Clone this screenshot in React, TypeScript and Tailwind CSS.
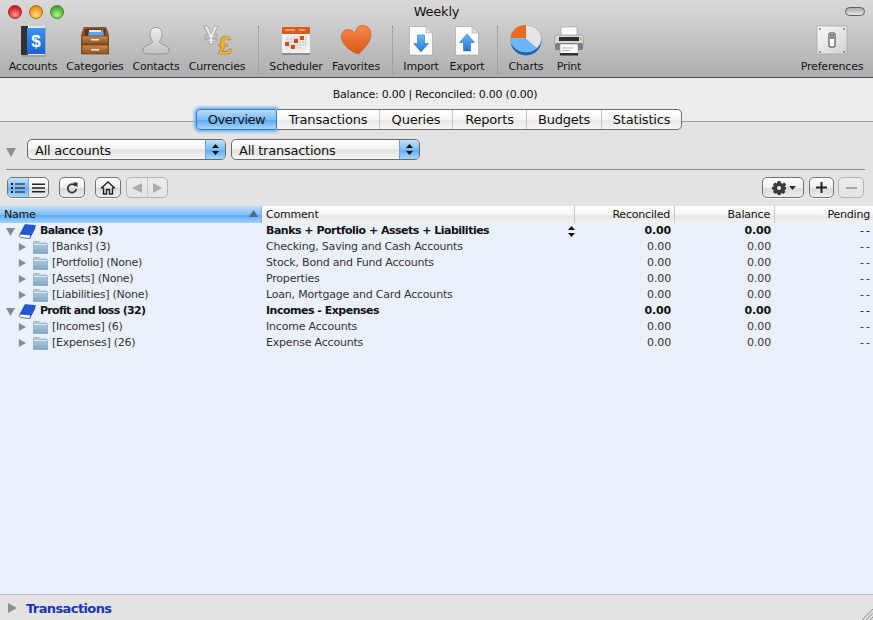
import type { ReactNode } from 'react';

const font = "[font-family:'DejaVu_Sans',sans-serif]";

function Book() {
  return (
    <svg width="32" height="32" viewBox="0 0 32 32">
      <defs>
        <linearGradient id="cover" x1="0" y1="0" x2="0" y2="1">
          <stop offset="0" stopColor="#3d93f5" />
          <stop offset="1" stopColor="#1a62cf" />
        </linearGradient>
      </defs>
      <rect x="5" y="2" width="24" height="30" fill="#000" opacity=".15" />
      <rect x="4" y="1" width="24" height="29" fill="#e8e8e8" />
      <rect x="4" y="1" width="7" height="29" fill="#2f3134" />
      <rect x="10" y="3" width="18" height="26" fill="url(#cover)" />
      <text x="19" y="22" textAnchor="middle" fontSize="17" fontWeight="700" fill="#fff" fontFamily="Liberation Sans">$</text>
    </svg>
  );
}

function Drawers() {
  return (
    <svg width="32" height="32" viewBox="0 0 32 32">
      <defs>
        <linearGradient id="wood" x1="0" y1="0" x2="0" y2="1">
          <stop offset="0" stopColor="#c98a4c" />
          <stop offset="1" stopColor="#8f5424" />
        </linearGradient>
      </defs>
      <path d="M4 4 Q4 2 6 2 H26 Q28 2 28 4 L30 10 V29 H2 V10 Z" fill="#8c5426" />
      <rect x="6" y="4" width="20" height="7" fill="#5c3516" />
      <path d="M9 11 L10 6 H22 L24 4 L25 11 Z" fill="#5aa9ee" />
      <rect x="10" y="5" width="12" height="2" fill="#dfeeff" />
      <rect x="3" y="11" width="26" height="8" fill="url(#wood)" stroke="#6e3f18" strokeWidth=".7" />
      <rect x="3" y="20" width="26" height="9" fill="url(#wood)" stroke="#6e3f18" strokeWidth=".7" />
      <rect x="12" y="14" width="8" height="1.5" fill="#e8e8e8" />
      <rect x="12" y="24" width="8" height="1.5" fill="#e8e8e8" />
    </svg>
  );
}

function Person() {
  return (
    <svg width="32" height="32" viewBox="0 0 32 32">
      <defs>
        <linearGradient id="person" x1="0" y1="0" x2="0" y2="1">
          <stop offset="0" stopColor="#ededed" />
          <stop offset="1" stopColor="#c2c2c2" />
        </linearGradient>
      </defs>
      <path
        d="M16 2.5 C20 2.5 22 5.5 22 9 C22 12 21 14.5 19.5 16.5 C19.5 19 24 19.5 27 21.5 C29 23 29 25 29 27 C29 28.5 24 29 16 29 C8 29 3 28.5 3 27 C3 25 3 23 5 21.5 C8 19.5 12.5 19 12.5 16.5 C11 14.5 10 12 10 9 C10 5.5 12 2.5 16 2.5 Z"
        fill="url(#person)"
        stroke="#7f7f7f"
        strokeWidth=".7"
      />
    </svg>
  );
}

function Currency() {
  return (
    <svg width="32" height="32" viewBox="0 0 32 32" overflow="visible">
      <text x="10" y="19" textAnchor="middle" fontSize="26" fontWeight="700" fill="#ededed" stroke="#8c8c8c" strokeWidth=".6" fontFamily="Liberation Sans">¥</text>
      <text x="24.5" y="29" textAnchor="middle" fontSize="25" fontWeight="700" fill="#f1b93b" stroke="#b5761a" strokeWidth=".6" fontFamily="Liberation Sans">£</text>
    </svg>
  );
}

function Calendar() {
  const red = [[14, 14], [20, 11], [5, 17], [11, 20]];
  return (
    <svg width="32" height="32" viewBox="0 0 32 32">
      <rect x="2" y="2" width="28" height="28" fill="#f0f0f0" />
      <rect x="2" y="28" width="28" height="2" fill="#8e8e8e" />
      <rect x="2" y="2" width="28" height="7" fill="#dc5a20" />
      <rect x="5" y="4.5" width="10" height="1" fill="#fbd8c4" />
      <rect x="19" y="4.5" width="6" height="1" fill="#fbd8c4" />
      <g stroke="#c2c2c2" strokeWidth=".6" fill="none">
        <path d="M5 14 H27 M5 17 H27 M5 20 H27 M5 23 H22 M8 11 V23 M11 11 V23 M14 11 V23 M17 11 V23 M20 11 V23 M23 11 V20 M26 11 V20" />
      </g>
      {red.map(([x, y]) => (
        <rect key={`${x}-${y}`} x={x} y={y} width="4" height="4" fill="#d8481a" />
      ))}
    </svg>
  );
}

function Heart() {
  return (
    <svg width="32" height="32" viewBox="0 0 32 32">
      <defs>
        <linearGradient id="heart" x1="0" y1="0" x2="0" y2="1">
          <stop offset="0" stopColor="#f78a4a" />
          <stop offset="1" stopColor="#dd5614" />
        </linearGradient>
      </defs>
      <path
        d="M21 .5 C27 -.5 31 4 31 9.5 C31 17 24 24 18.5 29 C13 27.5 3.5 22 1.5 13.5 C.5 8.5 3.5 4.5 8 4.5 C11 4.5 13.5 6 15 8 C16 4 18 1 21 .5 Z"
        fill="url(#heart)"
        stroke="#c14d10"
        strokeWidth=".5"
      />
    </svg>
  );
}

function Doc({ up }: { up?: boolean }) {
  return (
    <svg width="32" height="32" viewBox="0 0 32 32">
      <defs>
        <linearGradient id={up ? 'arrowUp' : 'arrowDown'} x1="0" y1="0" x2="0" y2="1">
          <stop offset="0" stopColor="#6db6f8" />
          <stop offset="1" stopColor="#2475d8" />
        </linearGradient>
      </defs>
      <path d="M4.5 1.5 H21 L27.5 8 V30 H4.5 Z" fill="#fcfcfc" stroke="#a8a8a8" strokeWidth=".7" />
      <path d="M21 1.5 V8 H27.5 Z" fill="#dedede" stroke="#a8a8a8" strokeWidth=".5" />
      {up ? (
        <path d="M16 9 L23.5 17.5 H19.5 V26 H12.5 V17.5 H8.5 Z" fill="url(#arrowUp)" stroke="#1f63b8" strokeWidth=".5" />
      ) : (
        <path d="M12.5 10 H19.5 V18.5 H23.5 L16 27 L8.5 18.5 H12.5 Z" fill="url(#arrowDown)" stroke="#1f63b8" strokeWidth=".5" />
      )}
    </svg>
  );
}

function Pie() {
  return (
    <svg width="32" height="32" viewBox="0 0 32 32">
      <ellipse cx="16" cy="15.5" rx="15.5" ry="15" fill="#1f62b0" />
      <ellipse cx="16" cy="13.5" rx="15.5" ry="13.5" fill="#e6e6e6" stroke="#9a9a9a" strokeWidth=".5" />
      <path d="M16 13.5 L.5 13 A15.5 13.5 0 0 1 16 0 Z" fill="#ea6a24" />
      <path d="M16 13.5 L.5 13 A15.5 13.5 0 0 0 27 23 Z" fill="#6cb6f7" />
    </svg>
  );
}

function Printer() {
  return (
    <svg width="32" height="32" viewBox="0 0 32 32">
      <rect x="8" y="2" width="16" height="10" fill="#fafafa" stroke="#9c9c9c" strokeWidth=".6" />
      <rect x="1.5" y="10" width="29" height="12" rx="2.5" fill="#d5d5d5" stroke="#8f8f8f" strokeWidth=".6" />
      <rect x="6" y="12" width="20" height="4" fill="#303030" />
      <rect x="2" y="18" width="28" height="7" rx="1.5" fill="#7e7e7e" />
      <rect x="27" y="13" width="2" height="1.5" fill="#e5962d" />
      <rect x="7" y="19" width="18" height="11" fill="#fbfbfb" stroke="#8f8f8f" strokeWidth=".6" />
      <path d="M9 23 H20 M9 25.5 H17" stroke="#9a9a9a" strokeWidth=".7" />
      <rect x="7" y="28" width="18" height="2.5" fill="#333" />
    </svg>
  );
}

function Switch() {
  const screws = [[4, 4], [28, 4], [4, 27], [28, 27]];
  return (
    <svg width="32" height="32" viewBox="0 0 32 32">
      <defs>
        <linearGradient id="plate" x1="0" y1="0" x2="1" y2="1">
          <stop offset="0" stopColor="#fafafa" />
          <stop offset="1" stopColor="#d2d2d2" />
        </linearGradient>
      </defs>
      <rect x="1" y="1" width="30" height="28" fill="url(#plate)" stroke="#9b9b9b" strokeWidth=".6" />
      {screws.map(([x, y]) => (
        <circle key={`${x}-${y}`} cx={x} cy={y} r="1" fill="#777" />
      ))}
      <rect x="13" y="8" width="6" height="14" rx="1" fill="#fff" stroke="#333" strokeWidth="1" />
      <rect x="14" y="9" width="4" height="5" fill="#8a8a8a" />
    </svg>
  );
}

function SmallBook() {
  return (
    <svg width="17" height="15" viewBox="0 0 17 15">
      <path d="M6 .5 L16.5 1.5 L11.5 11 L1 10 Z" fill="#1f58d6" stroke="#123a9c" strokeWidth=".5" />
      <path d="M1 10 Q0 12.5 1.5 13.5 L11 14.5 L11.5 11 Z" fill="#fff" stroke="#123a9c" strokeWidth=".7" />
      <path d="M11.5 11 L11 14.5 L16 5 L16.5 1.5 Z" fill="#1a4ab8" />
    </svg>
  );
}

function Folder() {
  return (
    <svg width="15" height="13" viewBox="0 0 16 13" preserveAspectRatio="none">
      <defs>
        <linearGradient id="folder" x1="0" y1="0" x2="0" y2="1">
          <stop offset="0" stopColor="#bad4e6" />
          <stop offset="1" stopColor="#7ea9c6" />
        </linearGradient>
      </defs>
      <path d="M.5 2 Q.5 .5 2 .5 H6 L7 2 H14 Q15.5 2 15.5 3.5 V12.5 H.5 Z" fill="url(#folder)" stroke="#7d97aa" strokeWidth=".6" />
      <path d="M1 3.5 H15" stroke="#e3eff7" strokeWidth=".8" />
    </svg>
  );
}

function Tri({ down, color = '#8a8a8a', size = 9 }: { down?: boolean; color?: string; size?: number }) {
  return (
    <svg width={size} height={size} viewBox="0 0 10 10">
      <path d={down ? 'M0 1 H10 L5 10 Z' : 'M1 0 L10 5 L1 10 Z'} fill={color} />
    </svg>
  );
}

function Stepper({ color = '#111' }: { color?: string }) {
  return (
    <svg width="7" height="11" viewBox="0 0 7 11">
      <path d="M3.5 0 L7 4 H0 Z M3.5 11 L0 7 H7 Z" fill={color} />
    </svg>
  );
}

const tools = [
  { label: 'Accounts', icon: <Book />, cls: 'w-[62px]' },
  { label: 'Categories', icon: <Drawers />, cls: 'w-[62px]' },
  { label: 'Contacts', icon: <Person />, cls: 'w-[60px]' },
  { label: 'Currencies', icon: <Currency />, cls: 'w-[62px]' },
  { sep: true, cls: 'ml-[10px] mr-[7px]' },
  { label: 'Scheduler', icon: <Calendar />, cls: 'w-[60px]' },
  { label: 'Favorites', icon: <Heart />, cls: 'w-[60px]' },
  { sep: true, cls: 'ml-[6px] mr-[5px]' },
  { label: 'Import', icon: <Doc />, cls: 'w-[46px]' },
  { label: 'Export', icon: <Doc up />, cls: 'w-[46px]' },
  { sep: true, cls: 'ml-[7px] mr-[5px]' },
  { label: 'Charts', icon: <Pie />, cls: 'w-[46px]' },
  { label: 'Print', icon: <Printer />, cls: 'w-[40px]' },
];

function Tool({ label, icon, cls }: { label: string; icon: ReactNode; cls: string }) {
  return (
    <div className={`flex flex-col items-center ${cls}`}>
      <div className="h-[32px] w-[32px]">{icon}</div>
      <div className="mt-[3px] whitespace-nowrap text-[11px] leading-[14px] tracking-[-0.2px] text-[#141414]">{label}</div>
    </div>
  );
}

const tabs = [
  { label: 'Transactions', cls: 'w-[103px]' },
  { label: 'Queries', cls: 'w-[73px]' },
  { label: 'Reports', cls: 'w-[74px]' },
  { label: 'Budgets', cls: 'w-[75px]' },
  { label: 'Statistics', cls: 'w-[79px] rounded-r-[5px] border-r-0' },
];

const aqua = 'bg-[linear-gradient(#c4e0fb,#7dbcf7_50%,#5faaf3_52%,#a9dafe)]';
const btn =
  'flex h-[21px] items-center justify-center rounded-[5px] border border-[#747474] bg-[linear-gradient(#ffffff,#f0f0f0_50%,#dcdcdc_55%,#eeeeee)] shadow-[0_1px_0_#ffffff]';
const btnOff =
  'flex h-[21px] items-center justify-center rounded-[5px] border border-[#b5b5b5] bg-[linear-gradient(#ececec,#e4e4e4)]';

function Select({ label, cls }: { label: string; cls: string }) {
  return (
    <div className={`flex h-[21px] items-stretch overflow-hidden rounded-[5px] border border-[#6a6a6a] bg-[linear-gradient(#ffffff,#f3f3f3_45%,#e2e2e2_55%,#f8f8f8)] ${cls}`}>
      <div className="flex-1 pl-[7px] text-[13px] leading-[21px] tracking-[-0.25px] text-[#111]">{label}</div>
      <div className={`flex w-[20px] items-center justify-center border-l border-[#7c9ccb] ${aqua}`}>
        <Stepper />
      </div>
    </div>
  );
}

const rows = [
  { name: 'Balance (3)', comment: 'Banks + Portfolio + Assets + Liabilities', top: true, stepper: true },
  { name: '[Banks] (3)', comment: 'Checking, Saving and Cash Accounts' },
  { name: '[Portfolio] (None)', comment: 'Stock, Bond and Fund Accounts' },
  { name: '[Assets] (None)', comment: 'Properties' },
  { name: '[Liabilities] (None)', comment: 'Loan, Mortgage and Card Accounts' },
  { name: 'Profit and loss (32)', comment: 'Incomes - Expenses', top: true },
  { name: '[Incomes] (6)', comment: 'Income Accounts' },
  { name: '[Expenses] (26)', comment: 'Expense Accounts' },
];

const grid = 'grid grid-cols-[262px_313px_100px_100px_98px]';

export default function App() {
  return (
    <div className={`flex h-[620px] w-[873px] flex-col overflow-hidden bg-[#e3e3e3] ${font}`}>
      {/* title bar and toolbar */}
      <div className="h-[78px] shrink-0 border-b border-[#4e4e4e] bg-[linear-gradient(#d9d9d9,#cbcbcb_35%,#adadad)]">
        <div className="grid h-[23px] grid-cols-[1fr_auto_1fr] items-center">
          <div className="flex gap-[7px] pl-[8px]">
            <div className="h-[14px] w-[14px] rounded-full border border-[#9c2a2a] bg-[radial-gradient(circle_at_50%_75%,#ff9a9a,#e02a2a_60%,#a81818)]" />
            <div className="h-[14px] w-[14px] rounded-full border border-[#a86c1a] bg-[radial-gradient(circle_at_50%_75%,#ffe08a,#f59a20_60%,#c8700c)]" />
            <div className="h-[14px] w-[14px] rounded-full border border-[#3f8a2c] bg-[radial-gradient(circle_at_50%_75%,#b4f08a,#5ab83a_60%,#35861f)]" />
          </div>
          <div className="text-[13px] leading-[16px] tracking-[-0.2px] text-[#111]">Weekly</div>
          <div className="flex justify-end pr-[8px]">
            <div className="h-[9px] w-[20px] rounded-full border border-[#5f5f5f] bg-[linear-gradient(#a9a9a9,#e6e6e6)]" />
          </div>
        </div>
        <div className="flex items-start pl-[2px] pt-[2px]">
          {tools.map((t, i) =>
            t.sep ? (
              <div key={i} className={`mt-[1px] h-[48px] w-0 border-l border-dotted border-[#8a8a8a] ${t.cls}`} />
            ) : (
              <Tool key={i} label={t.label as string} icon={t.icon} cls={t.cls} />
            ),
          )}
          <div className="ml-auto pr-[3px]">
            <Tool label="Preferences" icon={<Switch />} cls="w-[76px]" />
          </div>
        </div>
      </div>

      {/* balance and tabs */}
      <div className="h-[44px] shrink-0 border-b border-[#9c9c9c] bg-[#ededed] pr-[3px] pt-[10px] text-center text-[11px] leading-[14px] tracking-[-0.25px] text-[#111]">
        Balance: 0.00 | Reconciled: 0.00 (0.00)
      </div>
      <div className="relative -mt-[13px] flex h-[21px] shrink-0 pl-[196px] text-[13px] leading-[19px] tracking-[-0.2px] text-[#111]">
        <div className="flex w-[81px] items-center justify-center rounded-l-[4px] rounded-r-[2px] border border-[#3f78c8] bg-[linear-gradient(#b8dafb,#7cbcf7_50%,#5ca8f2_52%,#a5d6fd)] tracking-[-0.45px] shadow-[0_0_3px_2px_#6fb0f2]">
          Overview
        </div>
        <div className="flex rounded-r-[5px] border-y border-r border-[#6d6d6d] bg-[linear-gradient(#ffffff,#f4f4f4_50%,#e8e8e8_55%,#f6f6f6)]">
          {tabs.map((t) => (
            <div key={t.label} className={`flex items-center justify-center border-r border-[#c6c6c6] ${t.cls}`}>
              {t.label}
            </div>
          ))}
        </div>
      </div>

      {/* filters */}
      <div className="flex h-[39px] shrink-0 items-start pl-[6px] pt-[9px]">
        <div className="mr-[11px] mt-[8px]">
          <Tri down size={10} color="#8e8e8e" />
        </div>
        <Select label="All accounts" cls="w-[199px]" />
        <Select label="All transactions" cls="ml-[5px] w-[189px]" />
      </div>
      <div className="mx-[6px] h-px w-[859px] shrink-0 bg-[#8f8f8f]" />

      {/* buttons */}
      <div className="flex h-[36px] shrink-0 items-start pl-[7px] pr-[9px] pt-[7px]">
        <div className={`${btn} w-[42px] overflow-hidden`}>
          <div className={`flex h-full w-[21px] items-center justify-center border-r border-[#8aa5c8] ${aqua}`}>
            <svg width="14" height="10" viewBox="0 0 14 10">
              <path d="M0 0 H2 V2 H0 Z M4 .5 H14 V1.5 H4 Z M0 4 H2 V6 H0 Z M4 4.5 H14 V5.5 H4 Z M0 8 H2 V10 H0 Z M4 8.5 H14 V9.5 H4 Z" fill="#111" />
            </svg>
          </div>
          <div className="flex flex-1 items-center justify-center">
            <svg width="13" height="10" viewBox="0 0 13 10">
              <path d="M0 .5 H13 V2 H0 Z M0 4.25 H13 V5.75 H0 Z M0 8 H13 V9.5 H0 Z" fill="#222" />
            </svg>
          </div>
        </div>
        <div className={`${btn} ml-[10px] w-[26px]`}>
          <svg width="12" height="12" viewBox="0 0 12 12">
            <path d="M9.5 4 A4.2 4.2 0 1 0 10.2 7" fill="none" stroke="#333" strokeWidth="1.8" />
            <path d="M7 .5 L11.5 0.5 L11.5 5.5 Z" fill="#333" />
          </svg>
        </div>
        <div className={`${btn} ml-[10px] w-[26px]`}>
          <svg width="16" height="14" viewBox="0 0 16 14">
            <path d="M1 7.5 L8 1 L15 7.5 M3.5 6.5 V13 H6.5 V8.5 H9.5 V13 H12.5 V6.5" fill="none" stroke="#222" strokeWidth="1.4" />
          </svg>
        </div>
        <div className={`${btnOff} ml-[5px] w-[42px]`}>
          <div className="flex h-full flex-1 items-center justify-center border-r border-[#c8c8c8]">
            <svg width="10" height="10" viewBox="0 0 10 10"><path d="M10 0 V10 L0 5 Z" fill="#acacac" /></svg>
          </div>
          <div className="flex h-full flex-1 items-center justify-center">
            <Tri size={10} color="#acacac" />
          </div>
        </div>
        <div className={`${btn} ml-auto w-[42px] gap-[2px]`}>
          <svg width="16" height="16" viewBox="0 0 16 16">
            <path d="M6.6 1 H9.4 L9.8 3 L11.6 3.8 L13.4 2.6 L15.4 4.6 L13.6 6.6 L15 7 V9.6 L13.4 10 L14.4 12 L12.4 14 L10.4 12.8 L9.6 15 H6.6 L6 13 L4 13.8 L2 12 L3 10 L1 9.6 V6.8 L3 6.4 L2 4.4 L4 2.6 L6 3.4 Z" fill="#3a3a3a" />
            <circle cx="8" cy="8" r="2" fill="#e8e8e8" />
          </svg>
          <svg width="7" height="4" viewBox="0 0 7 4"><path d="M0 0 H7 L3.5 4 Z" fill="#333" /></svg>
        </div>
        <div className={`${btn} ml-[5px] w-[25px]`}>
          <svg width="11" height="11" viewBox="0 0 11 11"><path d="M4.5 0 H6.5 V4.5 H11 V6.5 H6.5 V11 H4.5 V6.5 H0 V4.5 H4.5 Z" fill="#222" /></svg>
        </div>
        <div className={`${btnOff} ml-[4px] w-[26px]`}>
          <div className="h-[2px] w-[11px] bg-[#a8a8a8]" />
        </div>
      </div>

      {/* table */}
      <div className={`${grid} h-[17px] shrink-0 border-b border-[#b9b9b9] text-[11px] leading-[18px] tracking-[-0.2px] text-[#111]`}>
        <div className={`flex items-center justify-between pl-[4px] pr-[3px] border-r border-[#8fb2d8] ${aqua}`}>
          <span>Name</span>
          <svg className="mb-[3px]" width="9" height="7" viewBox="0 0 9 7"><path d="M4.5 0 L9 7 H0 Z" fill="#4a6a8c" /></svg>
        </div>
        <div className="border-r border-[#c8c8c8] bg-[linear-gradient(#ffffff,#f3f3f3_50%,#e6e6e6_55%,#f4f4f4)] pl-[4px]">Comment</div>
        <div className="border-r border-[#c8c8c8] bg-[linear-gradient(#ffffff,#f3f3f3_50%,#e6e6e6_55%,#f4f4f4)] pr-[4px] text-right">Reconciled</div>
        <div className="border-r border-[#c8c8c8] bg-[linear-gradient(#ffffff,#f3f3f3_50%,#e6e6e6_55%,#f4f4f4)] pr-[4px] text-right">Balance</div>
        <div className="bg-[linear-gradient(#ffffff,#f3f3f3_50%,#e6e6e6_55%,#f4f4f4)] pr-[3px] text-right">Pending</div>
      </div>
      <div className="flex-1 bg-[#ebf1fc] text-[11px] leading-[16px] text-[#333]">
        {rows.map((r) => (
          <div key={r.name} className={`${grid} h-[16px] ${r.top ? 'font-bold text-[#111]' : ''}`}>
            {r.top ? (
              <div className="flex items-center pl-[6px] tracking-[-0.7px]">
                <Tri down color="#8a8a8a" />
                <span className="ml-[4px] flex w-[21px]"><SmallBook /></span>
                <span>{r.name}</span>
              </div>
            ) : (
              <div className="flex items-center pl-[18px] tracking-[-0.25px]">
                <Tri color="#8a8a8a" size={8} />
                <span className="ml-[7px] flex w-[19px]"><Folder /></span>
                <span>{r.name}</span>
              </div>
            )}
            <div className={`flex items-center justify-between pl-[4px] ${r.top ? 'tracking-[-0.5px]' : 'tracking-[-0.2px]'}`}>
              <span>{r.comment}</span>
              {r.stepper && <span className="flex"><Stepper /></span>}
            </div>
            <div className="pr-[4px] text-right tracking-[-0.15px]">0.00</div>
            <div className="pr-[4px] text-right tracking-[-0.15px]">0.00</div>
            <div className="pr-[1px] text-right font-normal tracking-[2px]">--</div>
          </div>
        ))}
      </div>

      {/* bottom bar */}
      <div className="relative flex h-[26px] shrink-0 items-center border-t border-[#bdbdbd] bg-[#e3e3e3] pl-[7px]">
        <Tri size={10} color="#8e8e8e" />
        <span className="ml-[9px] mt-[2px] text-[13px] font-bold leading-[16px] tracking-[-0.6px] text-[#1438b4]">Transactions</span>
        <svg className="absolute bottom-0 right-0" width="11" height="11" viewBox="0 0 11 11">
          <path d="M0 11 L11 0 M4 11 L11 4 M8 11 L11 8" stroke="#8a8a8a" strokeWidth="1.2" strokeDasharray="1 .6" />
        </svg>
      </div>
    </div>
  );
}
